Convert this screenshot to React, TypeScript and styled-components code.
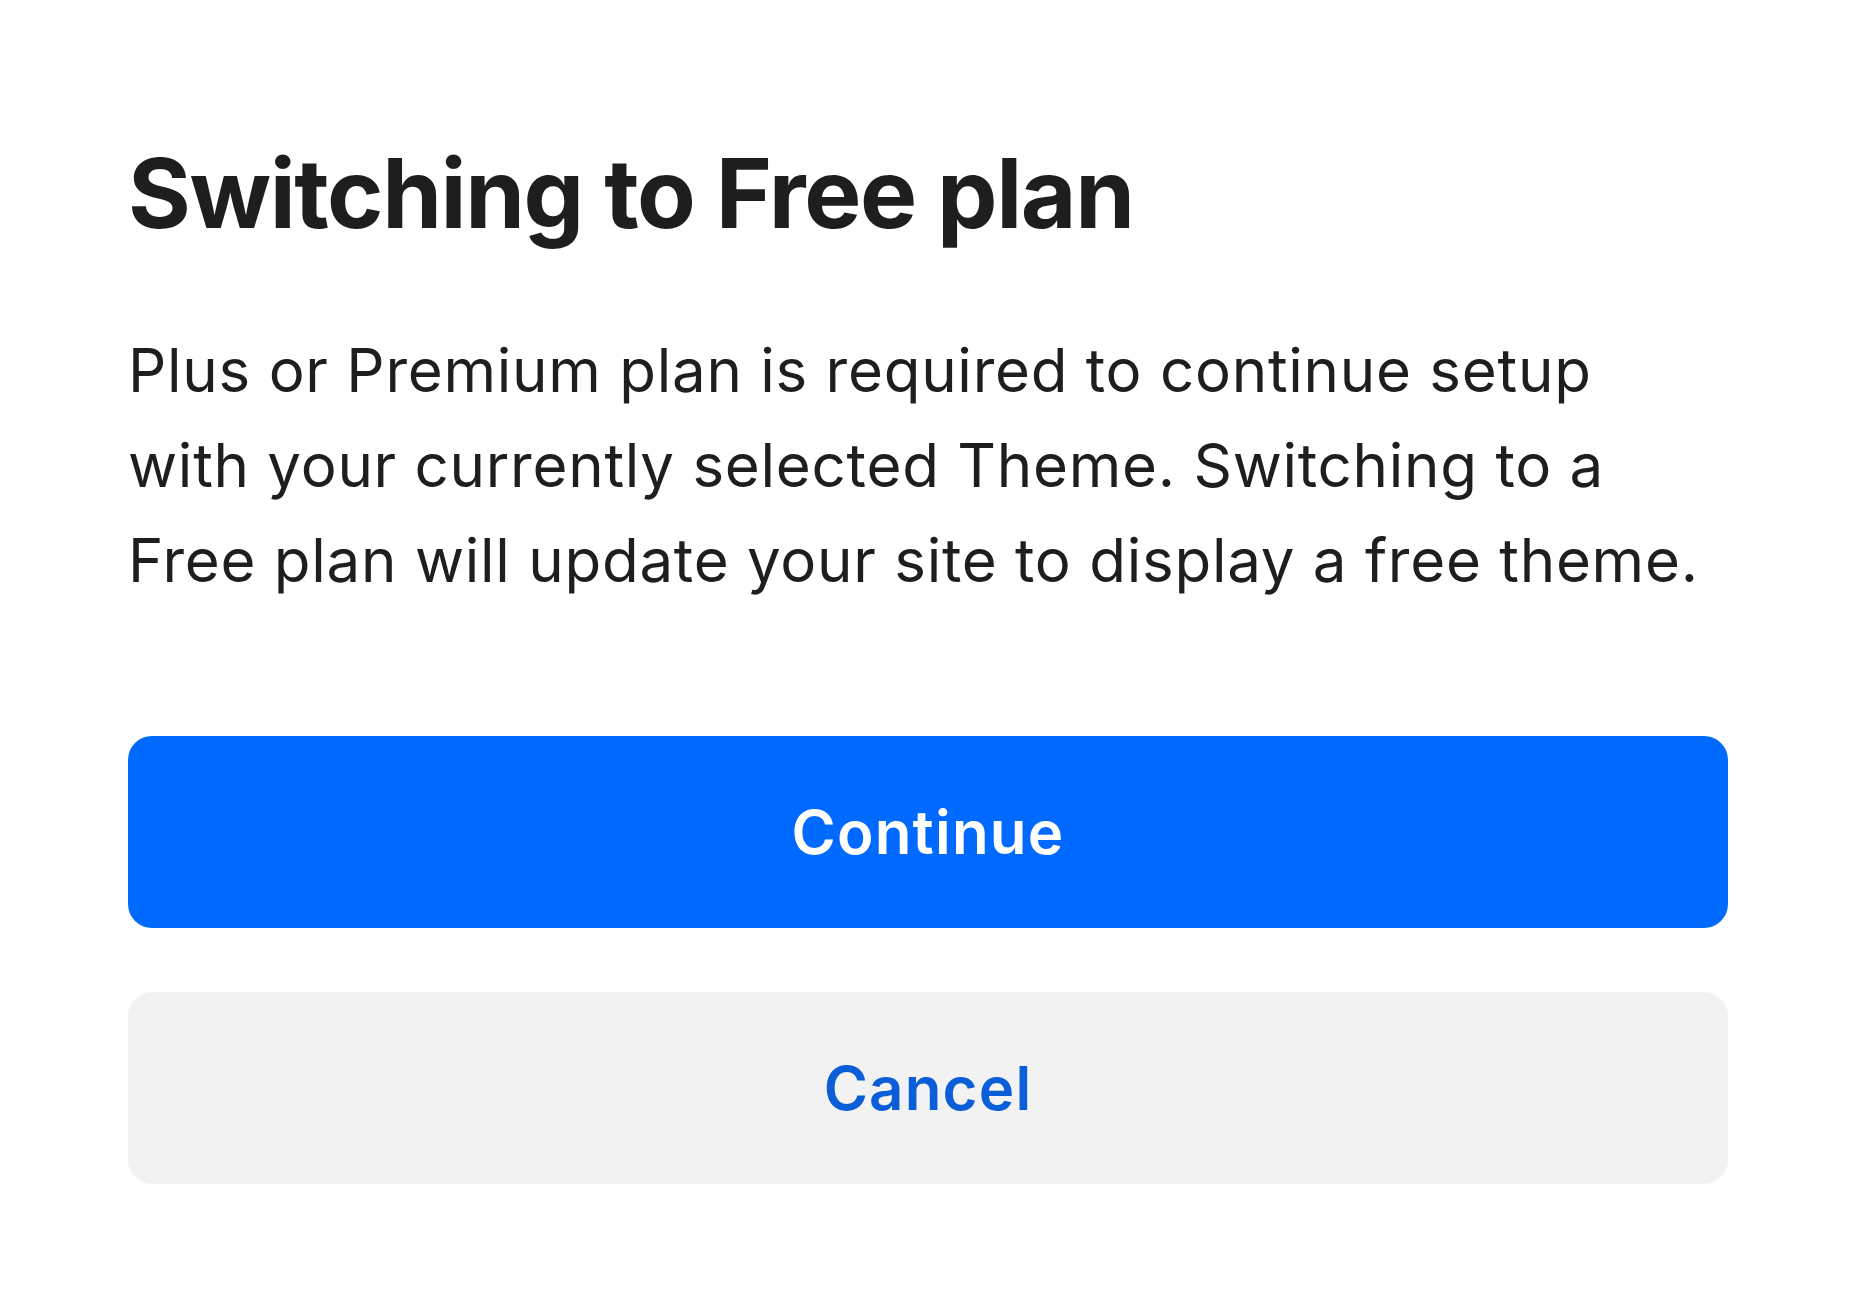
import styled, { createGlobalStyle } from "styled-components";

const GlobalStyle = createGlobalStyle`
  html, body {
    margin: 0;
    padding: 0;
    background: #ffffff;
  }
  body {
    font-family: Inter, "Noto Sans", sans-serif;
    -webkit-font-smoothing: antialiased;
  }
`;

const Dialog = styled.div`
  display: flex;
  flex-direction: column;
  padding: 135px 128px 0;
  box-sizing: border-box;
  width: 100%;
`;

const Title = styled.h1`
  margin: 0;
  font-size: 96px;
  line-height: 116px;
  font-weight: 700;
  letter-spacing: -1.4px;
  color: #1e1e1e;
`;

const Message = styled.p`
  margin: 72px 0 0;
  font-size: 60px;
  line-height: 95px;
  font-weight: 400;
  letter-spacing: 0.75px;
  color: #1e1e1e;
  max-width: 1580px;
`;

const Actions = styled.div`
  display: flex;
  flex-direction: column;
  gap: 64px;
  margin-top: 128px;
`;

const Button = styled.button<{ $variant: "primary" | "secondary" }>`
  height: 192px;
  width: 100%;
  border: none;
  border-radius: 24px;
  font-family: Inter, "Noto Sans", sans-serif;
  font-size: 60px;
  font-weight: 600;
  letter-spacing: 1.2px;
  cursor: pointer;
  background: ${(p) => (p.$variant === "primary" ? "#0069ff" : "#f2f2f2")};
  color: ${(p) => (p.$variant === "primary" ? "#ffffff" : "#0b5ed7")};
`;

export default function App() {
  return (
    <>
      <GlobalStyle />
      <Dialog>
        <Title>Switching to Free plan</Title>
        <Message>
          Plus or Premium plan is required to continue setup with your currently
          selected Theme. Switching to a Free plan will update your site to
          display a free theme.
        </Message>
        <Actions>
          <Button $variant="primary">Continue</Button>
          <Button $variant="secondary">Cancel</Button>
        </Actions>
      </Dialog>
    </>
  );
}
